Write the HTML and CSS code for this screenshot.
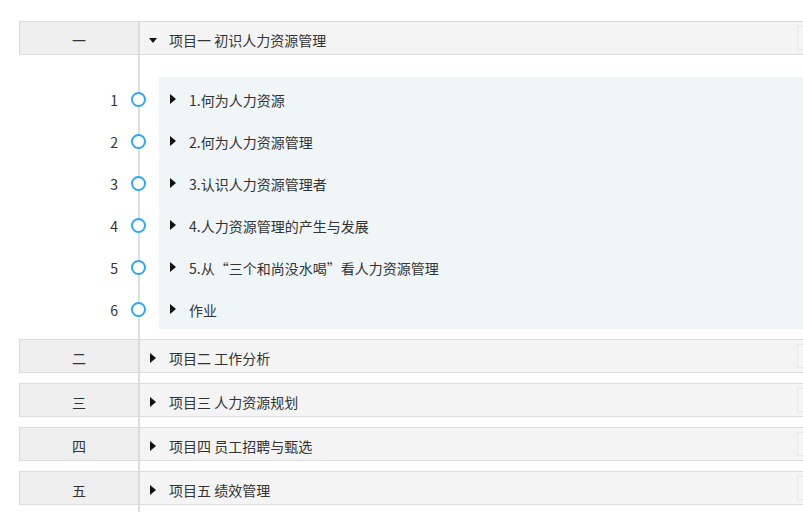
FILE: index.html
```html
<!DOCTYPE html>
<html lang="zh-CN">
<head>
    <meta charset="UTF-8">
    <title>课程目录</title>
    <link rel="stylesheet" href="styles.css">
</head>
<body>

    <!-- 课程目录 -->
    <div class="catalog">

        <div class="unit">
            <div class="unit-no">一</div>
            <div class="unit-title">
                <span class="arrow down"></span>
                <span class="name">项目一 初识人力资源管理</span>
                <span class="ops"></span>
            </div>
        </div>

        <!-- 展开的章节 -->
        <div class="lessons">
            <div class="lesson">
                <span class="num">1</span>
                <span class="dot"></span>
                <div class="lesson-body"><span class="arrow right"></span><span class="name">1.何为人力资源</span></div>
            </div>
            <div class="lesson">
                <span class="num">2</span>
                <span class="dot"></span>
                <div class="lesson-body"><span class="arrow right"></span><span class="name">2.何为人力资源管理</span></div>
            </div>
            <div class="lesson">
                <span class="num">3</span>
                <span class="dot"></span>
                <div class="lesson-body"><span class="arrow right"></span><span class="name">3.认识人力资源管理者</span></div>
            </div>
            <div class="lesson">
                <span class="num">4</span>
                <span class="dot"></span>
                <div class="lesson-body"><span class="arrow right"></span><span class="name">4.人力资源管理的产生与发展</span></div>
            </div>
            <div class="lesson">
                <span class="num">5</span>
                <span class="dot"></span>
                <div class="lesson-body"><span class="arrow right"></span><span class="name">5.从“三个和尚没水喝”看人力资源管理</span></div>
            </div>
            <div class="lesson">
                <span class="num">6</span>
                <span class="dot"></span>
                <div class="lesson-body"><span class="arrow right"></span><span class="name">作业</span></div>
            </div>
        </div>

        <div class="unit">
            <div class="unit-no">二</div>
            <div class="unit-title">
                <span class="arrow right"></span>
                <span class="name">项目二 工作分析</span>
                <span class="ops"></span>
            </div>
        </div>

        <div class="unit">
            <div class="unit-no">三</div>
            <div class="unit-title">
                <span class="arrow right"></span>
                <span class="name">项目三 人力资源规划</span>
                <span class="ops"></span>
            </div>
        </div>

        <div class="unit">
            <div class="unit-no">四</div>
            <div class="unit-title">
                <span class="arrow right"></span>
                <span class="name">项目四 员工招聘与甄选</span>
                <span class="ops"></span>
            </div>
        </div>

        <div class="unit">
            <div class="unit-no">五</div>
            <div class="unit-title">
                <span class="arrow right"></span>
                <span class="name">项目五 绩效管理</span>
                <span class="ops"></span>
            </div>
        </div>

    </div>

</body>
</html>
```

FILE: styles.css
```css
/* 基本样式 */
body {
    margin: 0;
    padding: 0;
    overflow: hidden;
    height: 100vh;
    background: #fff;
    font-family: "Noto Sans CJK SC", "Noto Sans", sans-serif;
    font-size: 14px;
    color: #333;
}

/* 目录容器，竖线用背景画出 */
.catalog {
    box-sizing: border-box;
    height: 100vh;
    margin-left: 19px;
    padding-top: 21px;
    display: flex;
    flex-direction: column;
    gap: 10px;
    background: linear-gradient(#dedede, #dedede) no-repeat 119px 21px / 2px 100%;
}

/* 单元行 */
.unit {
    display: flex;
    flex-shrink: 0;
    height: 32px;
    border-top: 1px solid #dcdcdc;
    border-bottom: 1px solid #dcdcdc;
}

.unit-no {
    width: 118px;
    padding-top: 3px;
    border-left: 1px solid #dcdcdc;
    border-right: 2px solid #dcdcdc;
    background: #efefef;
    display: flex;
    align-items: center;
    justify-content: center;
    color: #333;
}

.unit-title {
    flex: 1;
    overflow: hidden;
    background: #f4f4f4;
    display: flex;
    align-items: center;
    padding-left: 8px;
}

.unit-title .arrow {
    padding-top: 3px;
}

.unit-title .arrow.down {
    padding-top: 4px;
}

.unit-title .name {
    margin-left: 11px;
    padding-top: 4px;
}

.ops {
    flex-shrink: 0;
    margin-left: auto;
    margin-right: -36px;
    width: 40px;
    height: 22px;
    border: 1px solid #e8e8e8;
    background: #f5f5f5;
}

/* 三角形 */
.arrow {
    width: 10px;
    display: flex;
    justify-content: center;
}

.arrow::before {
    content: '';
    display: block;
}

.arrow.down::before {
    border-left: 4px solid transparent;
    border-right: 4px solid transparent;
    border-top: 5px solid #111;
}

.arrow.right::before {
    border-top: 5px solid transparent;
    border-bottom: 5px solid transparent;
    border-left: 6px solid #111;
}

/* 章节列表 */
.lessons {
    flex-shrink: 0;
    margin-top: 12px;
}

.lesson {
    display: flex;
    align-items: center;
    height: 42px;
}

.num {
    width: 99px;
    padding-top: 4px;
    text-align: right;
    color: #333;
}

.dot {
    width: 11px;
    height: 11px;
    margin: 2px 13px 0 13px;
    border: 2px solid #2aaaf6;
    border-radius: 50%;
    background: #fff;
}

.lesson-body {
    flex: 1;
    align-self: stretch;
    display: flex;
    align-items: center;
    padding-left: 9px;
    background: #f0f5f8;
}

.lesson-body .arrow {
    padding-top: 2px;
}

.lesson-body .name {
    margin-left: 11px;
    padding-top: 4px;
}
```
